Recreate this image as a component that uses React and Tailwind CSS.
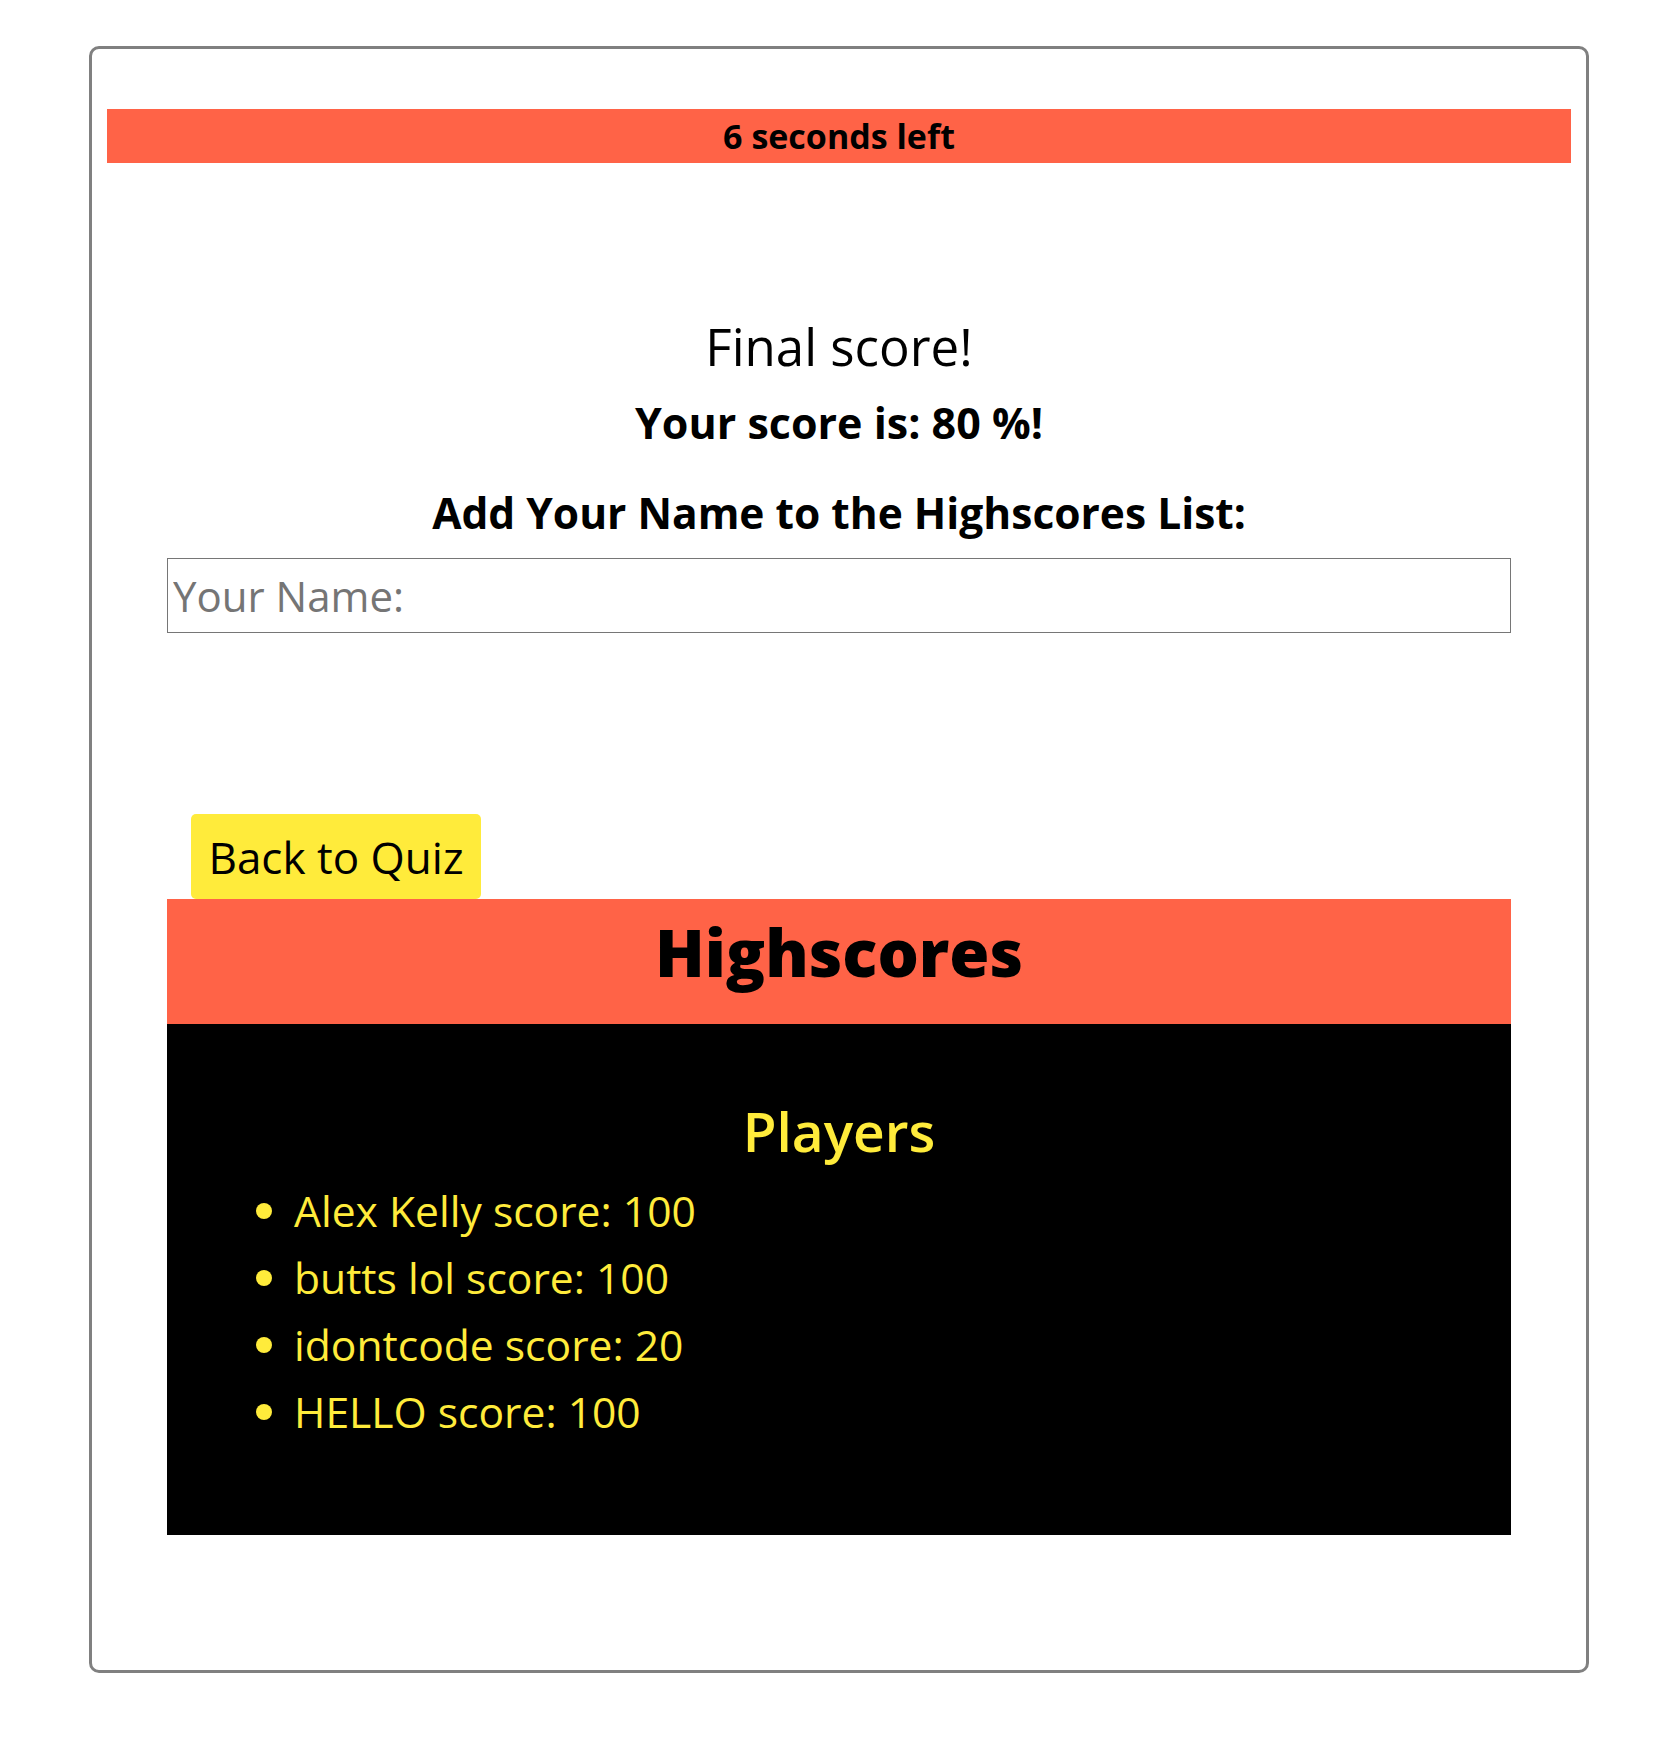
import React from 'react'

const players = [
  { name: 'Alex Kelly', score: 100 },
  { name: 'butts lol', score: 100 },
  { name: 'idontcode', score: 20 },
  { name: 'HELLO', score: 100 },
]

function Highscores() {
  return (
    <div className="w-[1344px] mx-auto">
      <div className="h-[125px] bg-[#ff6347] pt-[13px] text-center">
        <h1 className="text-[65px] leading-[80px] font-extrabold text-black">Highscores</h1>
      </div>
      <div className="h-[511px] bg-black pt-[72px] text-[#ffeb3b]">
        <h2 className="h-[70px] text-center text-[55px] leading-[70px] font-semibold">Players</h2>
        <ul className="mt-[11px]">
          {players.map((p) => (
            <li key={p.name} className="flex items-center h-[67px] text-[42.6px] leading-[67px]">
              <span className="ml-[89px] mr-[22px] w-[16px] h-[16px] rounded-full bg-[#ffeb3b]" />
              {p.name} score: {p.score}
            </li>
          ))}
        </ul>
      </div>
    </div>
  )
}

export default function App() {
  return (
    <div className="min-h-screen bg-white pt-[46px] font-['Open_Sans',sans-serif] text-black">
      <div className="ml-[89px] w-[1500px] h-[1627px] border-[3px] border-[#808080] rounded-[10px] px-[15px] pt-[60px]">
        <div className="h-[54px] bg-[#ff6347] flex items-center justify-center">
          <span className="text-[34px] font-bold">6 seconds left</span>
        </div>

        <div className="mt-[153px] text-center">
          <h2 className="h-[60px] text-[51px] leading-[60px]">Final score!</h2>
          <p className="mt-[22px] h-[50px] text-[43px] leading-[50px] font-bold">Your score is: 80 %!</p>
          <p className="mt-[40px] h-[50px] text-[42.5px] leading-[50px] font-bold">
            Add Your Name to the Highscores List:
          </p>
        </div>

        <div className="w-[1344px] mx-auto mt-[20px]">
          <input
            type="text"
            placeholder="Your Name:"
            className="block w-full h-[75px] border border-[#767676] px-[5px] text-[42px] placeholder:text-[#757575] outline-none"
          />
          <button className="mt-[181px] ml-[24px] w-[290px] h-[85px] rounded-[5px] bg-[#ffeb3b] text-[44px] text-black">
            Back to Quiz
          </button>
        </div>

        <Highscores />
      </div>
    </div>
  )
}
